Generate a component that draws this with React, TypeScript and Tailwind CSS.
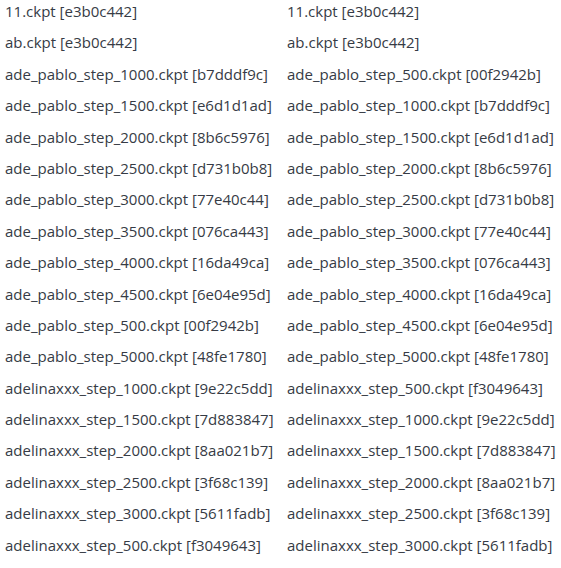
import React from "react";

const left = [
  "11.ckpt [e3b0c442]",
  "ab.ckpt [e3b0c442]",
  "ade_pablo_step_1000.ckpt [b7dddf9c]",
  "ade_pablo_step_1500.ckpt [e6d1d1ad]",
  "ade_pablo_step_2000.ckpt [8b6c5976]",
  "ade_pablo_step_2500.ckpt [d731b0b8]",
  "ade_pablo_step_3000.ckpt [77e40c44]",
  "ade_pablo_step_3500.ckpt [076ca443]",
  "ade_pablo_step_4000.ckpt [16da49ca]",
  "ade_pablo_step_4500.ckpt [6e04e95d]",
  "ade_pablo_step_500.ckpt [00f2942b]",
  "ade_pablo_step_5000.ckpt [48fe1780]",
  "adelinaxxx_step_1000.ckpt [9e22c5dd]",
  "adelinaxxx_step_1500.ckpt [7d883847]",
  "adelinaxxx_step_2000.ckpt [8aa021b7]",
  "adelinaxxx_step_2500.ckpt [3f68c139]",
  "adelinaxxx_step_3000.ckpt [5611fadb]",
  "adelinaxxx_step_500.ckpt [f3049643]",
];

const right = [
  "11.ckpt [e3b0c442]",
  "ab.ckpt [e3b0c442]",
  "ade_pablo_step_500.ckpt [00f2942b]",
  "ade_pablo_step_1000.ckpt [b7dddf9c]",
  "ade_pablo_step_1500.ckpt [e6d1d1ad]",
  "ade_pablo_step_2000.ckpt [8b6c5976]",
  "ade_pablo_step_2500.ckpt [d731b0b8]",
  "ade_pablo_step_3000.ckpt [77e40c44]",
  "ade_pablo_step_3500.ckpt [076ca443]",
  "ade_pablo_step_4000.ckpt [16da49ca]",
  "ade_pablo_step_4500.ckpt [6e04e95d]",
  "ade_pablo_step_5000.ckpt [48fe1780]",
  "adelinaxxx_step_500.ckpt [f3049643]",
  "adelinaxxx_step_1000.ckpt [9e22c5dd]",
  "adelinaxxx_step_1500.ckpt [7d883847]",
  "adelinaxxx_step_2000.ckpt [8aa021b7]",
  "adelinaxxx_step_2500.ckpt [3f68c139]",
  "adelinaxxx_step_3000.ckpt [5611fadb]",
];

function Column({ items }: { items: string[] }) {
  return (
    <ul className="flex flex-col">
      {items.map((t, i) => (
        <li key={i} className="h-[31.4px] whitespace-nowrap">
          {t}
        </li>
      ))}
    </ul>
  );
}

export default function App() {
  return (
    <div
      className="w-[561px] h-[568px] bg-white text-[#363b45] text-[15px] leading-[22px] overflow-hidden"
      style={{ fontFamily: '"Open Sans", "Noto Sans", sans-serif' }}
    >
      <div className="grid grid-cols-[282px_279px] pl-[5px]">
        <Column items={left} />
        <Column items={right} />
      </div>
    </div>
  );
}
